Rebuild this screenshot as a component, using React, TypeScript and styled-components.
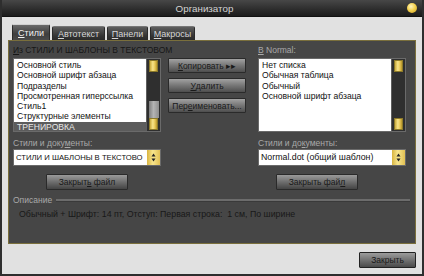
import React from "react";
import styled, { createGlobalStyle } from "styled-components";

const GlobalStyle = createGlobalStyle`
  html, body {
    margin: 0;
    padding: 0;
    background: #2a2a2a;
  }
  body {
    font-family: "Liberation Sans", Arial, sans-serif;
  }
`;

const Window = styled.div`
  width: 424px;
  height: 276px;
  box-sizing: border-box;
  display: flex;
  flex-direction: column;
  background: #e1e1e1;
  border: 2px solid #2e2e2e;
  border-top: none;
  overflow: hidden;
`;

const TitleBar = styled.div`
  height: 17px;
  flex: none;
  display: flex;
  align-items: center;
  background: linear-gradient(#474747, #2c2c2c 60%, #1c1c1c);
  border-bottom: 1px solid #111;
  box-sizing: border-box;
`;

const Title = styled.div`
  flex: 1;
  text-align: center;
  color: #d4d4d4;
  font-size: 9.8px;
`;

const CloseDot = styled.div`
  width: 10px;
  height: 10px;
  margin-right: 5px;
  border-radius: 50%;
  background: radial-gradient(circle at 40% 35%, #fff5c0, #f4d250 45%, #c79a1c);
`;

const Body = styled.div`
  flex: 1;
  display: flex;
  flex-direction: column;
  padding: 7px 6px 0 6px;
`;

const TabRow = styled.div`
  display: flex;
  align-items: flex-end;
  gap: 2px;
  height: 16px;
  margin-left: 4px;
`;

const Tab = styled.div<{ $active?: boolean; $w: number }>`
  width: ${({ $w }) => $w}px;
  height: ${({ $active }) => ($active ? 16 : 14)}px;
  box-sizing: border-box;
  display: flex;
  align-items: center;
  justify-content: center;
  font-size: 9px;
  color: ${({ $active }) => ($active ? "#f2f2f2" : "#d6d6d6")};
  background: ${({ $active }) =>
    $active
      ? "linear-gradient(#6a6a6a, #3e3e3e 60%, #4a4a4a)"
      : "linear-gradient(#5e5e5e, #333 70%, #2a2a2a)"};
  border: 1px solid #2a2a2a;
  border-top-color: ${({ $active }) => ($active ? "#cfcfcf" : "#777")};
  border-bottom: none;
  border-radius: 2px 2px 0 0;
`;

const Panel = styled.div`
  height: 204px;
  box-sizing: border-box;
  background: #464646;
  border: 1px solid #7a6f3c;
  padding: 4px 9px 0 4px;
  display: flex;
  flex-direction: column;
`;

const Columns = styled.div`
  display: flex;
  align-items: flex-start;
`;

const Column = styled.div<{ $w: number; $gapLeft?: number; $top?: number }>`
  width: ${({ $w }) => $w}px;
  flex: none;
  display: flex;
  flex-direction: column;
  margin-left: ${({ $gapLeft }) => $gapLeft ?? 0}px;
  padding-top: ${({ $top }) => $top ?? 0}px;
`;

const Label = styled.div<{ $dark?: boolean; $mt?: number }>`
  height: 11px;
  line-height: 11px;
  font-size: 8.5px;
  margin-top: ${({ $mt }) => $mt ?? 0}px;
  white-space: nowrap;
  color: ${({ $dark }) => ($dark ? "#161616" : "#a9a9a9")};
`;

const ListBox = styled.div`
  margin-top: 2px;
  height: 74px;
  display: flex;
  box-sizing: border-box;
  border: 1px solid #6a6a6a;
  background: #fff;
`;

const ListItems = styled.div`
  flex: 1;
  overflow: hidden;
  padding-top: 1px;
`;

const Item = styled.div<{ $selected?: boolean }>`
  height: 10.3px;
  line-height: 10.3px;
  font-size: 8.6px;
  padding-left: 3px;
  white-space: nowrap;
  color: ${({ $selected }) => ($selected ? "#e8e8e8" : "#111")};
  background: ${({ $selected }) => ($selected ? "#5c5c5c" : "transparent")};
`;

const ScrollTrack = styled.div`
  width: 14px;
  box-sizing: border-box;
  background: #2f2f2f;
  border-left: 1px solid #5e5e5e;
  display: flex;
  flex-direction: column;
  align-items: center;
  padding: 1px 0;
`;

const YellowKnob = styled.div`
  width: 9px;
  height: 12px;
  box-sizing: border-box;
  border: 1px solid #8c7a2a;
  background: linear-gradient(90deg, #c9a93a, #f8e48a 40%, #e8c856 70%, #b7942a);
`;

const GrayThumb = styled.div`
  width: 10px;
  height: 17px;
  margin-top: auto;
  background: linear-gradient(90deg, #7e7e7e, #b4b4b4 45%, #8e8e8e);
`;

const Spacer = styled.div`
  flex: 1;
`;

const SideButton = styled.div<{ $w?: number }>`
  width: ${({ $w }) => $w ?? 78}px;
  height: 15px;
  box-sizing: border-box;
  display: flex;
  align-items: center;
  justify-content: center;
  font-size: 8.5px;
  color: #1a1a1a;
  white-space: nowrap;
  border: 1px solid #2a2a2a;
  border-radius: 1px;
  background: linear-gradient(#a2a2a2, #7a7a7a 45%, #4e4e4e);
  & + & {
    margin-top: 5px;
  }
`;

const Select = styled.div`
  height: 17px;
  box-sizing: border-box;
  display: flex;
  border: 1px solid #6a6a6a;
  background: #fff;
`;

const SelectText = styled.div<{ $caps?: boolean }>`
  flex: 1;
  font-size: ${({ $caps }) => ($caps ? 7.7 : 8.8)}px;
  line-height: 15px;
  padding-left: 2px;
  color: #111;
  white-space: nowrap;
  overflow: hidden;
`;

const Spinner = styled.div`
  width: 13px;
  display: flex;
  align-items: center;
  justify-content: center;
  background: linear-gradient(90deg, #d8b440, #f8e68e 45%, #e2c052);
`;

const CloseFileButton = styled(SideButton)<{ $offset: number }>`
  margin-top: 8px;
  margin-left: ${({ $offset }) => $offset}px;
  height: 16px;
  background: linear-gradient(#9a9a9a, #6e6e6e 50%, #444);
`;

const DescHead = styled.div`
  margin-top: 5px;
  display: flex;
  align-items: center;
  gap: 4px;
`;

const Rule = styled.div`
  flex: 1;
  height: 2px;
  background: #6c6c6c;
  border-bottom: 1px solid #3a3a3a;
  margin-right: -4px;
`;

const DescText = styled.div`
  margin-top: 3px;
  padding-left: 6px;
  font-size: 8.8px;
  line-height: 10px;
  color: #181818;
  white-space: pre;
`;

const Footer = styled.div`
  display: flex;
  justify-content: flex-end;
  margin-top: 8px;
`;

const FooterButton = styled(SideButton)`
  width: 57px;
  height: 16px;
  border-color: #222;
  background: linear-gradient(#9c9c9c, #727272 50%, #4a4a4a);
`;

const U = styled.span`
  text-decoration: underline;
`;

const SpinIcon = () => (
  <svg width="5" height="9" viewBox="0 0 5 9">
    <path d="M2.5 0.5 L4.5 3.5 L0.5 3.5 Z" fill="#222" />
    <path d="M2.5 8.5 L4.5 5.5 L0.5 5.5 Z" fill="#222" />
  </svg>
);

const leftItems = [
  "Основной стиль",
  "Основной шрифт абзаца",
  "Подразделы",
  "Просмотренная гиперссылка",
  "Стиль1",
  "Структурные элементы",
];

const rightItems = ["Нет списка", "Обычная таблица", "Обычный", "Основной шрифт абзаца"];

export default function App() {
  return (
    <>
      <GlobalStyle />
      <Window>
        <TitleBar>
          <Title>Организатор</Title>
          <CloseDot />
        </TitleBar>
        <Body>
          <TabRow>
            <Tab $active $w={38}>
              <U>С</U>тили
            </Tab>
            <Tab $w={53}>
              <U>А</U>втотекст
            </Tab>
            <Tab $w={41}>
              <U>П</U>анели
            </Tab>
            <Tab $w={45}>
              <U>М</U>акросы
            </Tab>
          </TabRow>
          <Panel>
            <Columns>
              <Column $w={148}>
                <Label $dark>
                  <U>И</U>з СТИЛИ И ШАБЛОНЫ В ТЕКСТОВОМ
                </Label>
                <ListBox>
                  <ListItems>
                    {leftItems.map((t) => (
                      <Item key={t}>{t}</Item>
                    ))}
                    <Item $selected>ТРЕНИРОВКА</Item>
                  </ListItems>
                  <ScrollTrack>
                    <YellowKnob />
                    <GrayThumb />
                    <YellowKnob />
                  </ScrollTrack>
                </ListBox>
                <Label $mt={6}>
                  Стили и доку<U>м</U>енты:
                </Label>
                <Select>
                  <SelectText $caps>СТИЛИ И ШАБЛОНЫ В ТЕКСТОВО</SelectText>
                  <Spinner>
                    <SpinIcon />
                  </Spinner>
                </Select>
                <CloseFileButton $offset={33} $w={82}>
                  Закрыт<U>ь</U>&nbsp;файл
                </CloseFileButton>
              </Column>
              <Column $w={78} $gapLeft={7} $top={13}>
                <SideButton>
                  <U>К</U>опировать ▸▸
                </SideButton>
                <SideButton>
                  <U>У</U>далить
                </SideButton>
                <SideButton>
                  Пер<U>е</U>именовать...
                </SideButton>
              </Column>
              <Column $w={148} $gapLeft={12}>
                <Label>
                  <U>В</U> Normal:
                </Label>
                <ListBox>
                  <ListItems>
                    {rightItems.map((t) => (
                      <Item key={t}>{t}</Item>
                    ))}
                  </ListItems>
                  <ScrollTrack>
                    <YellowKnob />
                    <Spacer />
                    <YellowKnob />
                  </ScrollTrack>
                </ListBox>
                <Label $mt={6}>
                  Стили и до<U>к</U>ументы:
                </Label>
                <Select>
                  <SelectText>Normal.dot (общий шаблон)</SelectText>
                  <Spinner>
                    <SpinIcon />
                  </Spinner>
                </Select>
                <CloseFileButton $offset={18} $w={82}>
                  Закрыть фай<U>л</U>
                </CloseFileButton>
              </Column>
            </Columns>
            <DescHead>
              <Label>Описание</Label>
              <Rule />
            </DescHead>
            <DescText>Обычный + Шрифт: 14 пт, Отступ: Первая строка:  1 см, По ширине</DescText>
          </Panel>
          <Footer>
            <FooterButton>Закрыть</FooterButton>
          </Footer>
        </Body>
      </Window>
    </>
  );
}
